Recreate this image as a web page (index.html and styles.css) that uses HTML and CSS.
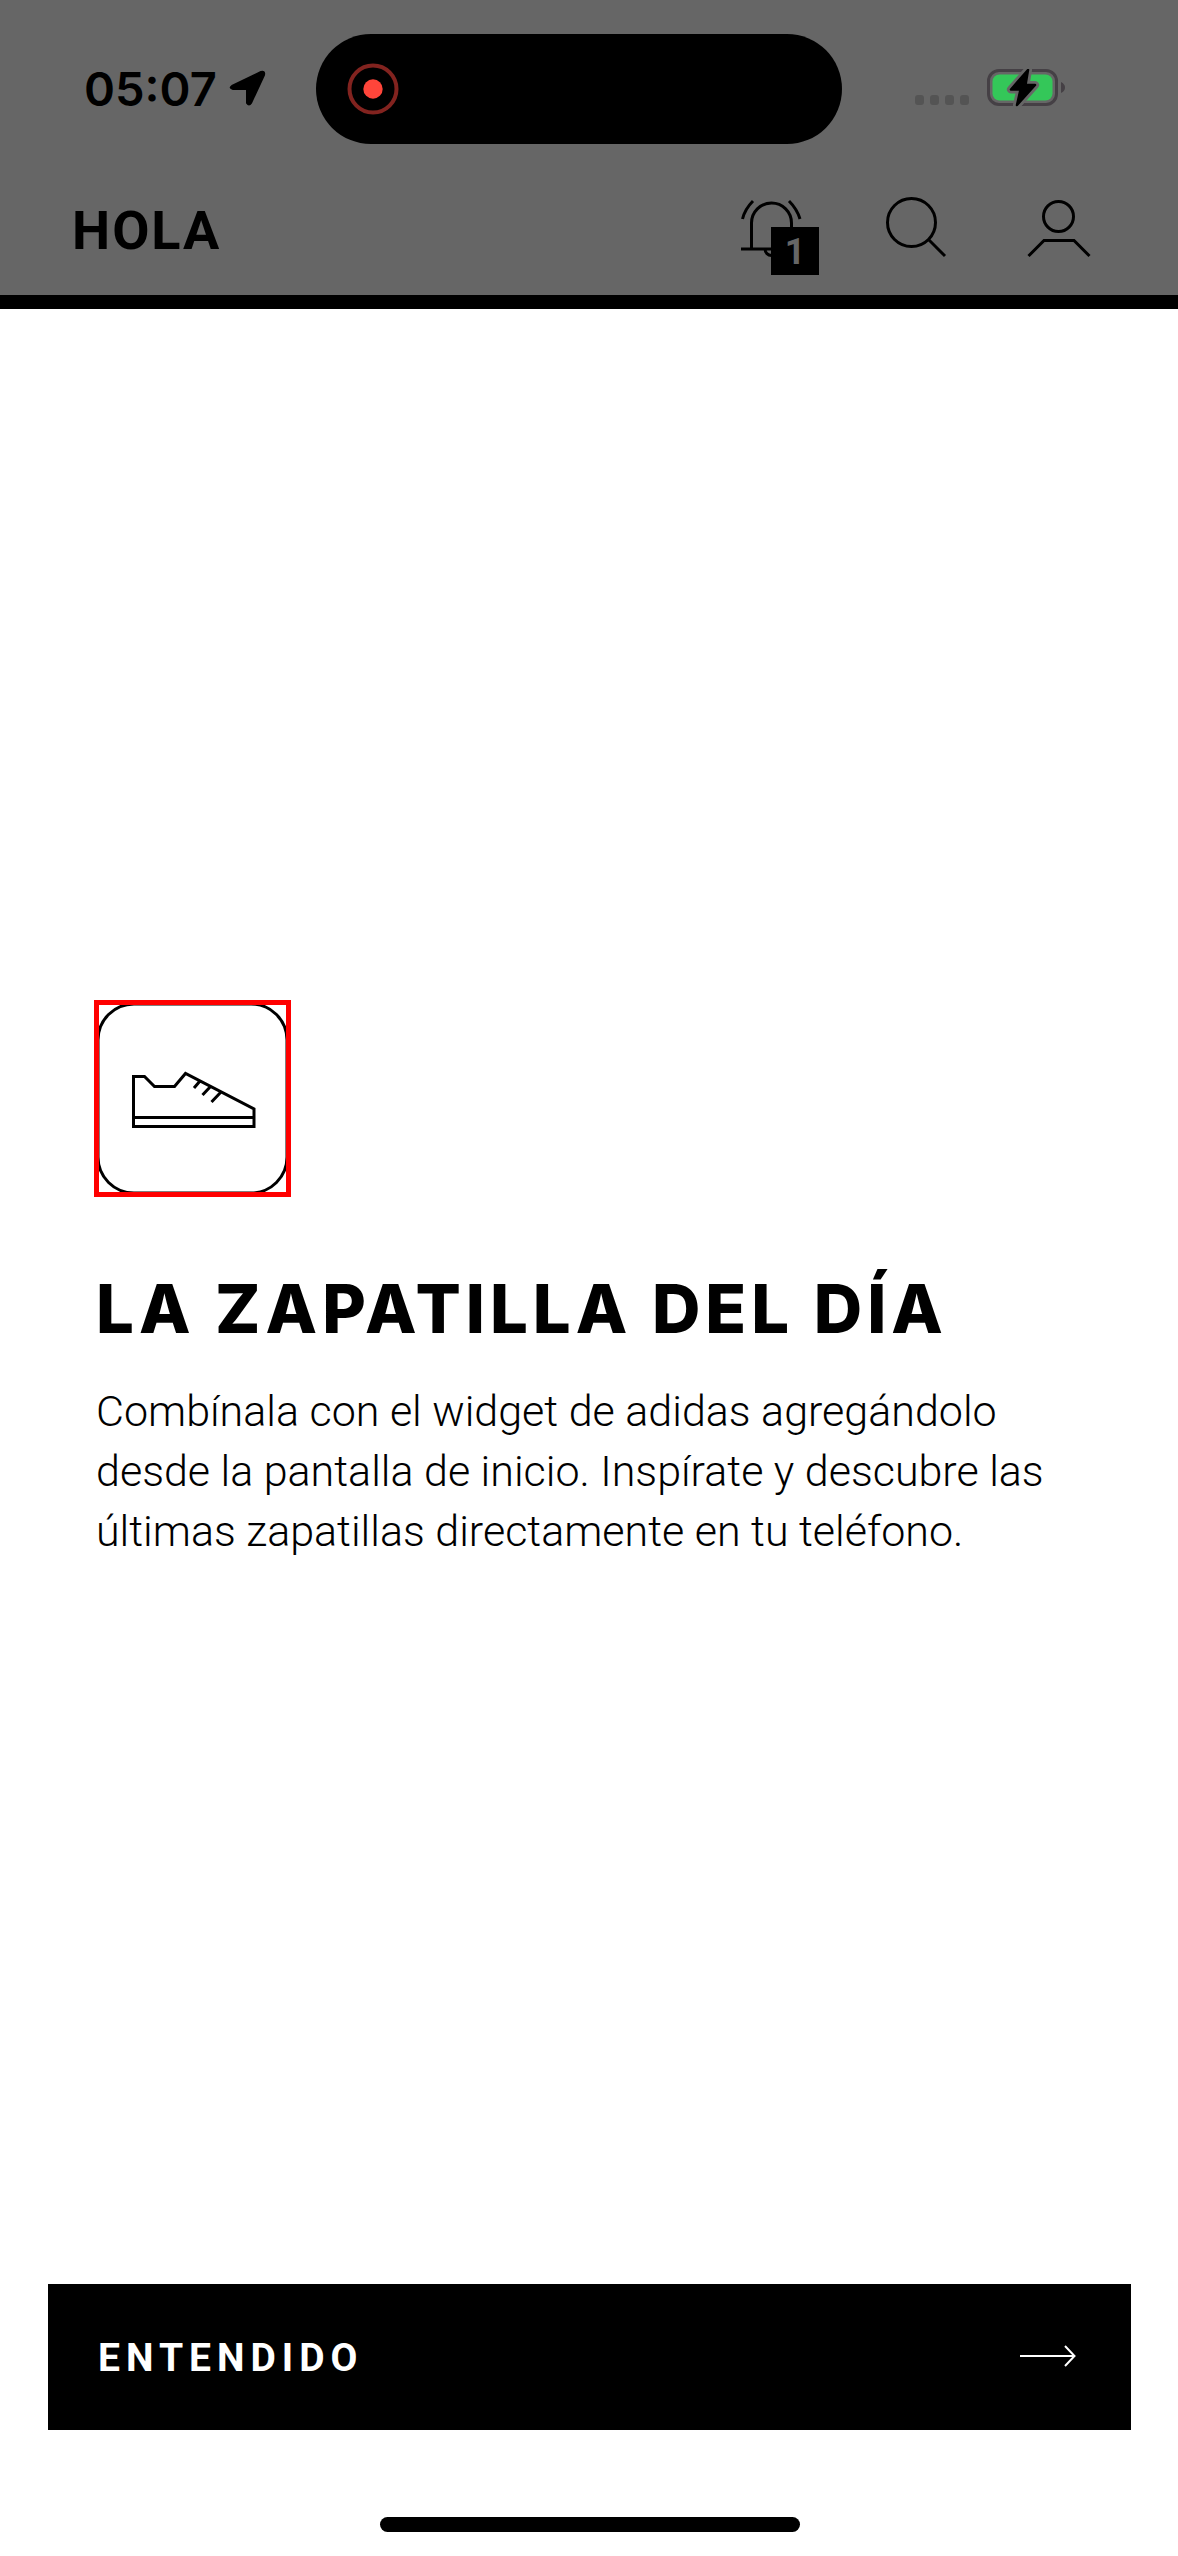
FILE: index.html
```html
<!DOCTYPE html>
<html lang="es">
<head>
<meta charset="utf-8">
<meta name="viewport" content="width=device-width, initial-scale=1">
<title>La zapatilla del día</title>
<link rel="stylesheet" href="styles.css">
</head>
<body>
<div class="screen">
  <div class="backdrop">
    <div class="status">
      <div class="status-left">
        <time class="clock">05:07</time>
        <svg class="location" width="38" height="38" viewBox="0 0 38 38" aria-hidden="true"><path d="M3 16 32 2Q36 1 35 5L22 33Q20 36 18 33V20Q18 19 17 19H4Q0 18 3 16Z" stroke="#000" stroke-width="2" stroke-linejoin="round"/></svg>
      </div>
      <div class="island">
        <svg width="52" height="52" viewBox="0 0 52 52" aria-hidden="true"><circle cx="26" cy="26" r="23.500" fill="none" stroke="#82231f" stroke-width="4"/><circle cx="26" cy="26" r="9.700" fill="#ff453a"/></svg>
      </div>
      <div class="status-right">
        <svg width="56" height="40" viewBox="0 0 56 40" fill="#545454" aria-hidden="true"><rect x="0" y="26" width="9" height="10" rx="3"/><rect x="15" y="26" width="9" height="10" rx="3"/><rect x="30" y="26" width="9" height="10" rx="3"/><rect x="45" y="26" width="9" height="10" rx="3"/></svg>
        <svg width="80" height="40" viewBox="0 0 80 40" aria-hidden="true"><rect x="1.500" y="1.500" width="68" height="34" rx="10.500" fill="none" stroke="#454045" stroke-width="3"/><rect x="5.500" y="5.500" width="60" height="26" rx="7" fill="#34c759"/><path d="M74 13Q78 15 78 18.500T74 24Z" fill="#454045"/><path d="M41 1 24 20.500H33.500L30 36 48 16H38.500Z" fill="#666" stroke="#666" stroke-width="8" stroke-linejoin="round"/><path d="M41 1 24 20.500H33.500L30 36 48 16H38.500Z" stroke="#000" stroke-width="2.500" stroke-linejoin="round"/></svg>
      </div>
    </div>
    <header class="header">
      <h2 class="greeting">HOLA</h2>
      <nav class="actions">
        <button class="action" type="button" aria-label="Notificaciones">
          <svg width="64" height="64" viewBox="0 0 64 64" fill="none" stroke="#000" stroke-width="3" aria-hidden="true"><path d="M2 54H62M12.500 54V28a20 20 0 0 1 40 0V54M26 54a6.500 6.500 0 0 0 13 0M3.500 24Q6 14 14 6M61 24Q58 14 50 6"/></svg>
          <span class="badge">1</span>
        </button>
        <button class="action" type="button" aria-label="Buscar">
          <svg width="64" height="64" viewBox="0 0 64 64" fill="none" stroke="#000" stroke-width="3" aria-hidden="true"><circle cx="28.500" cy="27.500" r="24"/><path d="M46 45 62 61"/></svg>
        </button>
        <button class="action" type="button" aria-label="Perfil">
          <svg width="64" height="64" viewBox="0 0 64 64" fill="none" stroke="#000" stroke-width="3" aria-hidden="true"><circle cx="31.500" cy="21.500" r="15"/><path d="M1.500 61 17 45.500H47L62.500 61"/></svg>
        </button>
      </nav>
    </header>
  </div>
  <main class="sheet">
    <section class="message">
      <div class="frame">
        <svg viewBox="0 0 187 187" fill="none" stroke="#000" stroke-width="3" aria-hidden="true"><rect x="-1" y="-1" width="189" height="189" rx="36"/><path d="M34.500 121V71.500H45.500L55.500 81.500H75.500L86.500 68.500 155 104V121M34.500 112.500H155M33 121.500H156.500M101 76 95 83M112 81 103.500 90M122 87 112.500 97"/></svg>
      </div>
      <h1 class="title">LA ZAPATILLA DEL DÍA</h1>
      <p class="text">Combínala con el widget de adidas agregándolo desde la pantalla de inicio. Inspírate y descubre las últimas zapatillas directamente en tu teléfono.</p>
    </section>
    <button class="confirm" type="button">
      <span>ENTENDIDO</span>
      <svg width="58" height="26" viewBox="0 0 58 26" fill="none" stroke="#fff" stroke-width="2" aria-hidden="true"><path d="M1 11H55M46 1 55.500 11 46 21"/></svg>
    </button>
    <div class="home"></div>
  </main>
</div>
</body>
</html>
```
FILE: styles.css
```css
* {
  box-sizing: border-box;
}

body {
  margin: 0;
  background: #fff;
  color: #000;
  font-family: Roboto, "Liberation Sans", sans-serif;
}

button {
  border: 0;
  padding: 0;
  color: inherit;
  font: inherit;
  cursor: pointer;
}

svg {
  display: block;
}

.screen {
  display: flex;
  flex-direction: column;
  min-height: 100vh;
}

.backdrop {
  padding-top: 34px;
  background: #666;
}

.status {
  display: grid;
  grid-template-columns: 1fr 526px 1fr;
  align-items: center;
  padding-right: 20px;
}

.status-left {
  display: flex;
  align-items: center;
  gap: 12px;
  padding-left: 84px;
}

.clock {
  font-family: Inter, sans-serif;
  font-size: 47px;
  font-weight: 600;
  line-height: 56px;
}

.island {
  display: flex;
  align-items: center;
  height: 110px;
  padding-left: 31px;
  border-radius: 55px;
  background: #000;
}

.status-right {
  display: flex;
  justify-content: flex-end;
  gap: 16px;
  padding-right: 91px;
}

.header {
  display: flex;
  align-items: flex-end;
  justify-content: space-between;
  height: 151px;
  padding: 0 87px 32px 72px;
}

.greeting {
  margin: 0;
  font-size: 54px;
  font-weight: 700;
  line-height: 64px;
  letter-spacing: 2px;
}

.actions {
  display: flex;
  gap: 80px;
  padding-bottom: 4px;
}

.action {
  position: relative;
  background: none;
}

.badge {
  position: absolute;
  left: 32px;
  top: 32px;
  width: 48px;
  height: 48px;
  background: #000;
  color: #666;
  font-size: 36px;
  font-weight: 700;
  line-height: 50px;
  text-align: center;
}

.sheet {
  display: flex;
  flex: 1;
  flex-direction: column;
  padding: 0 47px 24px 48px;
  border-top: 14px solid #000;
}

.message {
  display: flex;
  flex: 1;
  flex-direction: column;
  justify-content: center;
  padding: 0 46px 32px;
}

.frame {
  align-self: flex-start;
  border: 5px solid #f00;
}

.frame svg {
  width: 187px;
  height: 187px;
}

.title,
.text {
  padding-left: 2px;
}

.title {
  margin: 72px 0 32px;
  font-family: Inter, sans-serif;
  font-size: 67px;
  font-weight: 800;
  line-height: 80px;
  letter-spacing: 5px;
}

.text {
  margin: 0;
  font-size: 43px;
  font-weight: 300;
  line-height: 60px;
}

.confirm {
  display: flex;
  align-items: center;
  justify-content: space-between;
  height: 146px;
  padding: 2px 54px 0 50px;
  background: #000;
  color: #fff;
  font-size: 39px;
  font-weight: 700;
  letter-spacing: 6px;
}

.home {
  align-self: center;
  width: 420px;
  height: 15px;
  margin-top: 87px;
  border-radius: 8px;
  background: #000;
}
```
